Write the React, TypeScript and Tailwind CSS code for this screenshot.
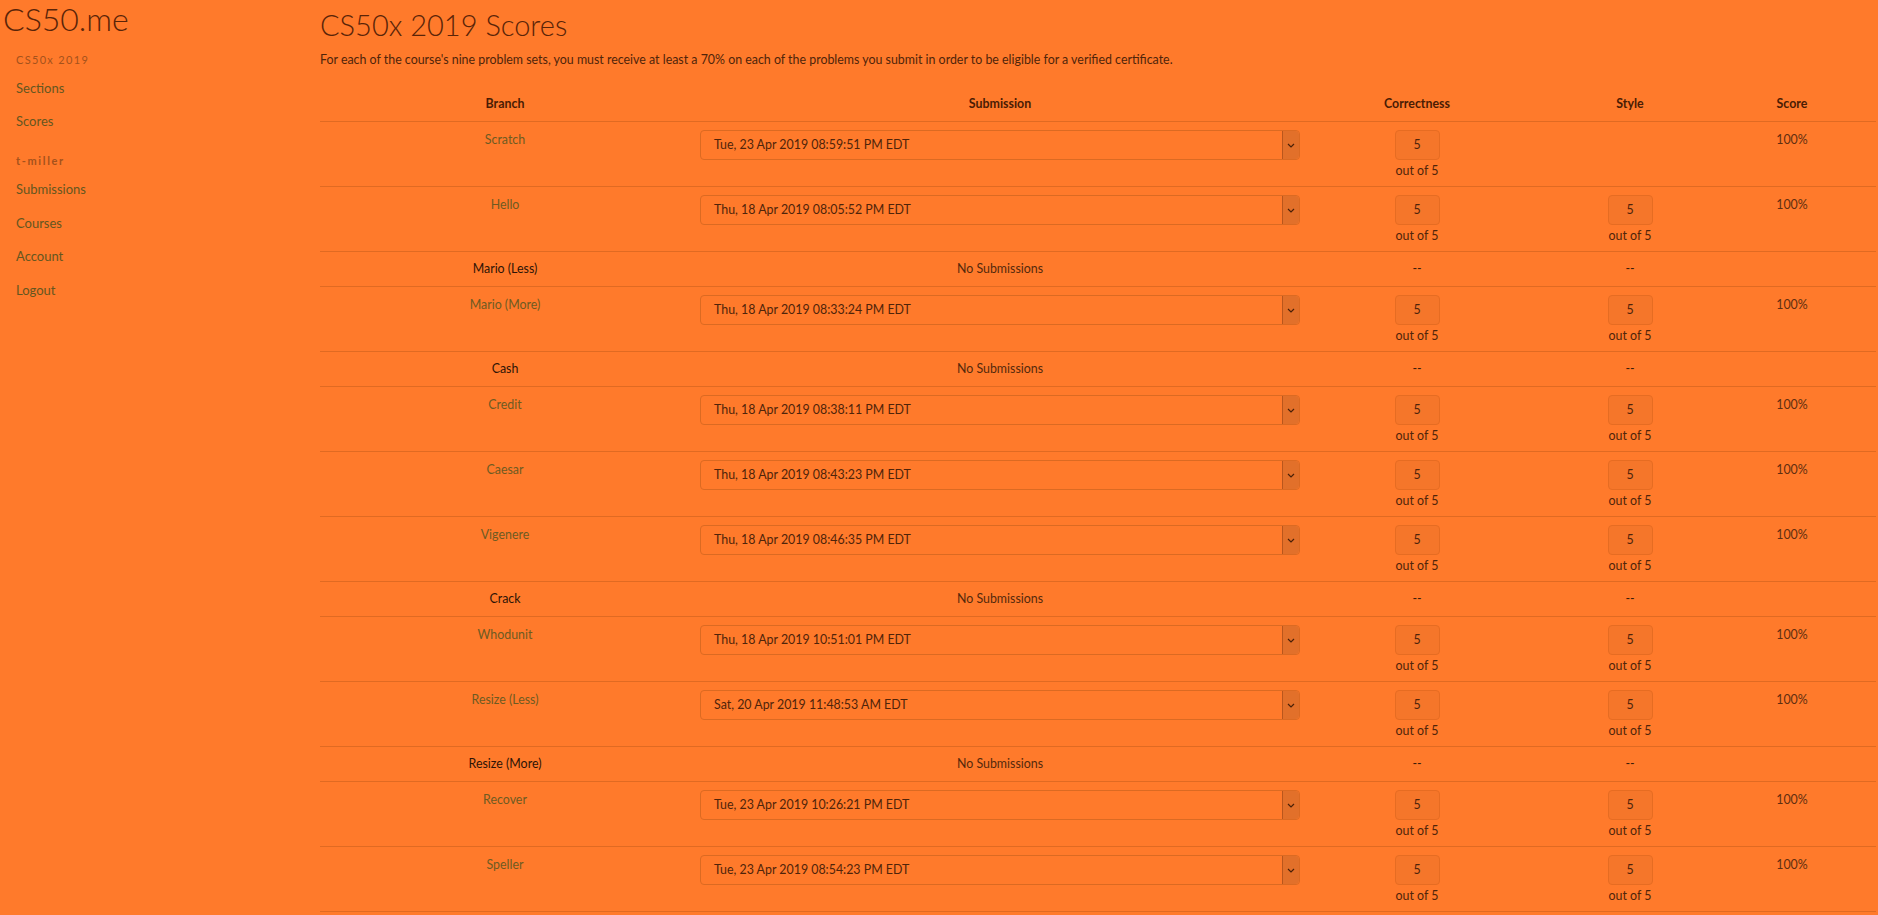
import React from "react";

type Row = {
  branch: string;
  submission?: string;
  correctness?: number;
  style?: number;
  score?: string;
};

const rows: Row[] = [
  { branch: "Scratch", submission: "Tue, 23 Apr 2019 08:59:51 PM EDT", correctness: 5, score: "100%" },
  { branch: "Hello", submission: "Thu, 18 Apr 2019 08:05:52 PM EDT", correctness: 5, style: 5, score: "100%" },
  { branch: "Mario (Less)" },
  { branch: "Mario (More)", submission: "Thu, 18 Apr 2019 08:33:24 PM EDT", correctness: 5, style: 5, score: "100%" },
  { branch: "Cash" },
  { branch: "Credit", submission: "Thu, 18 Apr 2019 08:38:11 PM EDT", correctness: 5, style: 5, score: "100%" },
  { branch: "Caesar", submission: "Thu, 18 Apr 2019 08:43:23 PM EDT", correctness: 5, style: 5, score: "100%" },
  { branch: "Vigenere", submission: "Thu, 18 Apr 2019 08:46:35 PM EDT", correctness: 5, style: 5, score: "100%" },
  { branch: "Crack" },
  { branch: "Whodunit", submission: "Thu, 18 Apr 2019 10:51:01 PM EDT", correctness: 5, style: 5, score: "100%" },
  { branch: "Resize (Less)", submission: "Sat, 20 Apr 2019 11:48:53 AM EDT", correctness: 5, style: 5, score: "100%" },
  { branch: "Resize (More)" },
  { branch: "Recover", submission: "Tue, 23 Apr 2019 10:26:21 PM EDT", correctness: 5, style: 5, score: "100%" },
  { branch: "Speller", submission: "Tue, 23 Apr 2019 08:54:23 PM EDT", correctness: 5, style: 5, score: "100%" },
];

const cols = "grid grid-cols-[370px_620px_214px_212px_112px_1fr]";

function ScoreBox({ value }: { value: number }) {
  return (
    <div className="flex flex-col items-center">
      <div className="w-[45px] h-[30px] flex items-center justify-center rounded border border-[#e66c22] bg-[#f5762a] text-[#4f240a]">
        {value}
      </div>
      <div className="mt-[2px] leading-[18px] text-[#4f240a]">out of {value}</div>
    </div>
  );
}

function Picker({ label }: { label: string }) {
  return (
    <div className="mx-[10px] h-[30px] flex items-stretch rounded border border-[#db6a22] bg-[#ff7a2b]">
      <div className="flex-1 flex items-center pl-[13px] text-[#4f240a]">{label}</div>
      <div className="w-[17px] flex items-center justify-center bg-[#e2702a] border-l border-[#b9561c] rounded-r">
        <svg width="8" height="5" viewBox="0 0 8 5" fill="none">
          <path d="M1 1l3 3 3-3" stroke="#4a2008" strokeWidth="1.2" />
        </svg>
      </div>
    </div>
  );
}

function ScoreRow({ row }: { row: Row }) {
  if (!row.submission) {
    return (
      <div className={`${cols} border-b border-[#e06a22] pt-2 pb-2 leading-[18px]`}>
        <div className="text-center text-[#2e1406]">{row.branch}</div>
        <div className="text-center text-[#55290c]">No Submissions</div>
        <div className="text-center text-[#3a1a08]">--</div>
        <div className="text-center text-[#3a1a08]">--</div>
        <div />
        <div />
      </div>
    );
  }

  return (
    <div className={`${cols} border-b border-[#e06a22] pt-2 pb-[6px] leading-[18px]`}>
      <div className="text-center text-[#6e5a22] pt-[1px]">{row.branch}</div>
      <div>
        <Picker label={row.submission} />
      </div>
      <div>{row.correctness !== undefined && <ScoreBox value={row.correctness} />}</div>
      <div>{row.style !== undefined && <ScoreBox value={row.style} />}</div>
      <div className="text-center text-[#5f2e10] pt-[1px]">{row.score}</div>
      <div />
    </div>
  );
}

export default function App() {
  return (
    <div className="min-h-screen bg-[#ff7a2b] flex font-['Lato',sans-serif] text-[12.4px]">
      {/* Sidebar */}
      <aside className="w-[320px] shrink-0">
        <h1 className="pl-[3px] pt-[2px] text-[32px] leading-[34px] font-light text-[#5a2408]">CS50.me</h1>
        <div className="pl-4 mt-[16px] text-[11px] tracking-[0.12em] text-[#a5521c]">CS50x 2019</div>
        <nav className="pl-4 mt-[10px] flex flex-col gap-[15px] text-[13px] leading-[18.5px] text-[#65561f]">
          <a>Sections</a>
          <a>Scores</a>
        </nav>
        <div className="pl-4 mt-[22px] text-[11px] font-bold tracking-[0.15em] text-[#a5521c]">t-miller</div>
        <nav className="pl-4 mt-[11px] flex flex-col gap-[15px] text-[13px] leading-[18.5px] text-[#65561f]">
          <a>Submissions</a>
          <a>Courses</a>
          <a>Account</a>
          <a>Logout</a>
        </nav>
      </aside>

      {/* Main */}
      <main className="flex-1 pr-[2px]">
        <h2 className="pt-[8px] text-[29px] leading-[34px] font-light text-[#5a2408]">CS50x 2019 Scores</h2>
        <p className="mt-[9px] leading-[18px] text-[#4f240a]">
          For each of the course's nine problem sets, you must receive at least a 70% on each of the problems you submit in order to be eligible for a verified certificate.
        </p>

        <div className="mt-[18px]">
          <div className={`${cols} border-b border-[#e06a22] py-2 leading-[18px] font-bold text-[#4a1c04]`}>
            <div className="text-center">Branch</div>
            <div className="text-center">Submission</div>
            <div className="text-center">Correctness</div>
            <div className="text-center">Style</div>
            <div className="text-center">Score</div>
            <div />
          </div>
          {rows.map((r) => (
            <ScoreRow key={r.branch} row={r} />
          ))}
        </div>
      </main>
    </div>
  );
}
